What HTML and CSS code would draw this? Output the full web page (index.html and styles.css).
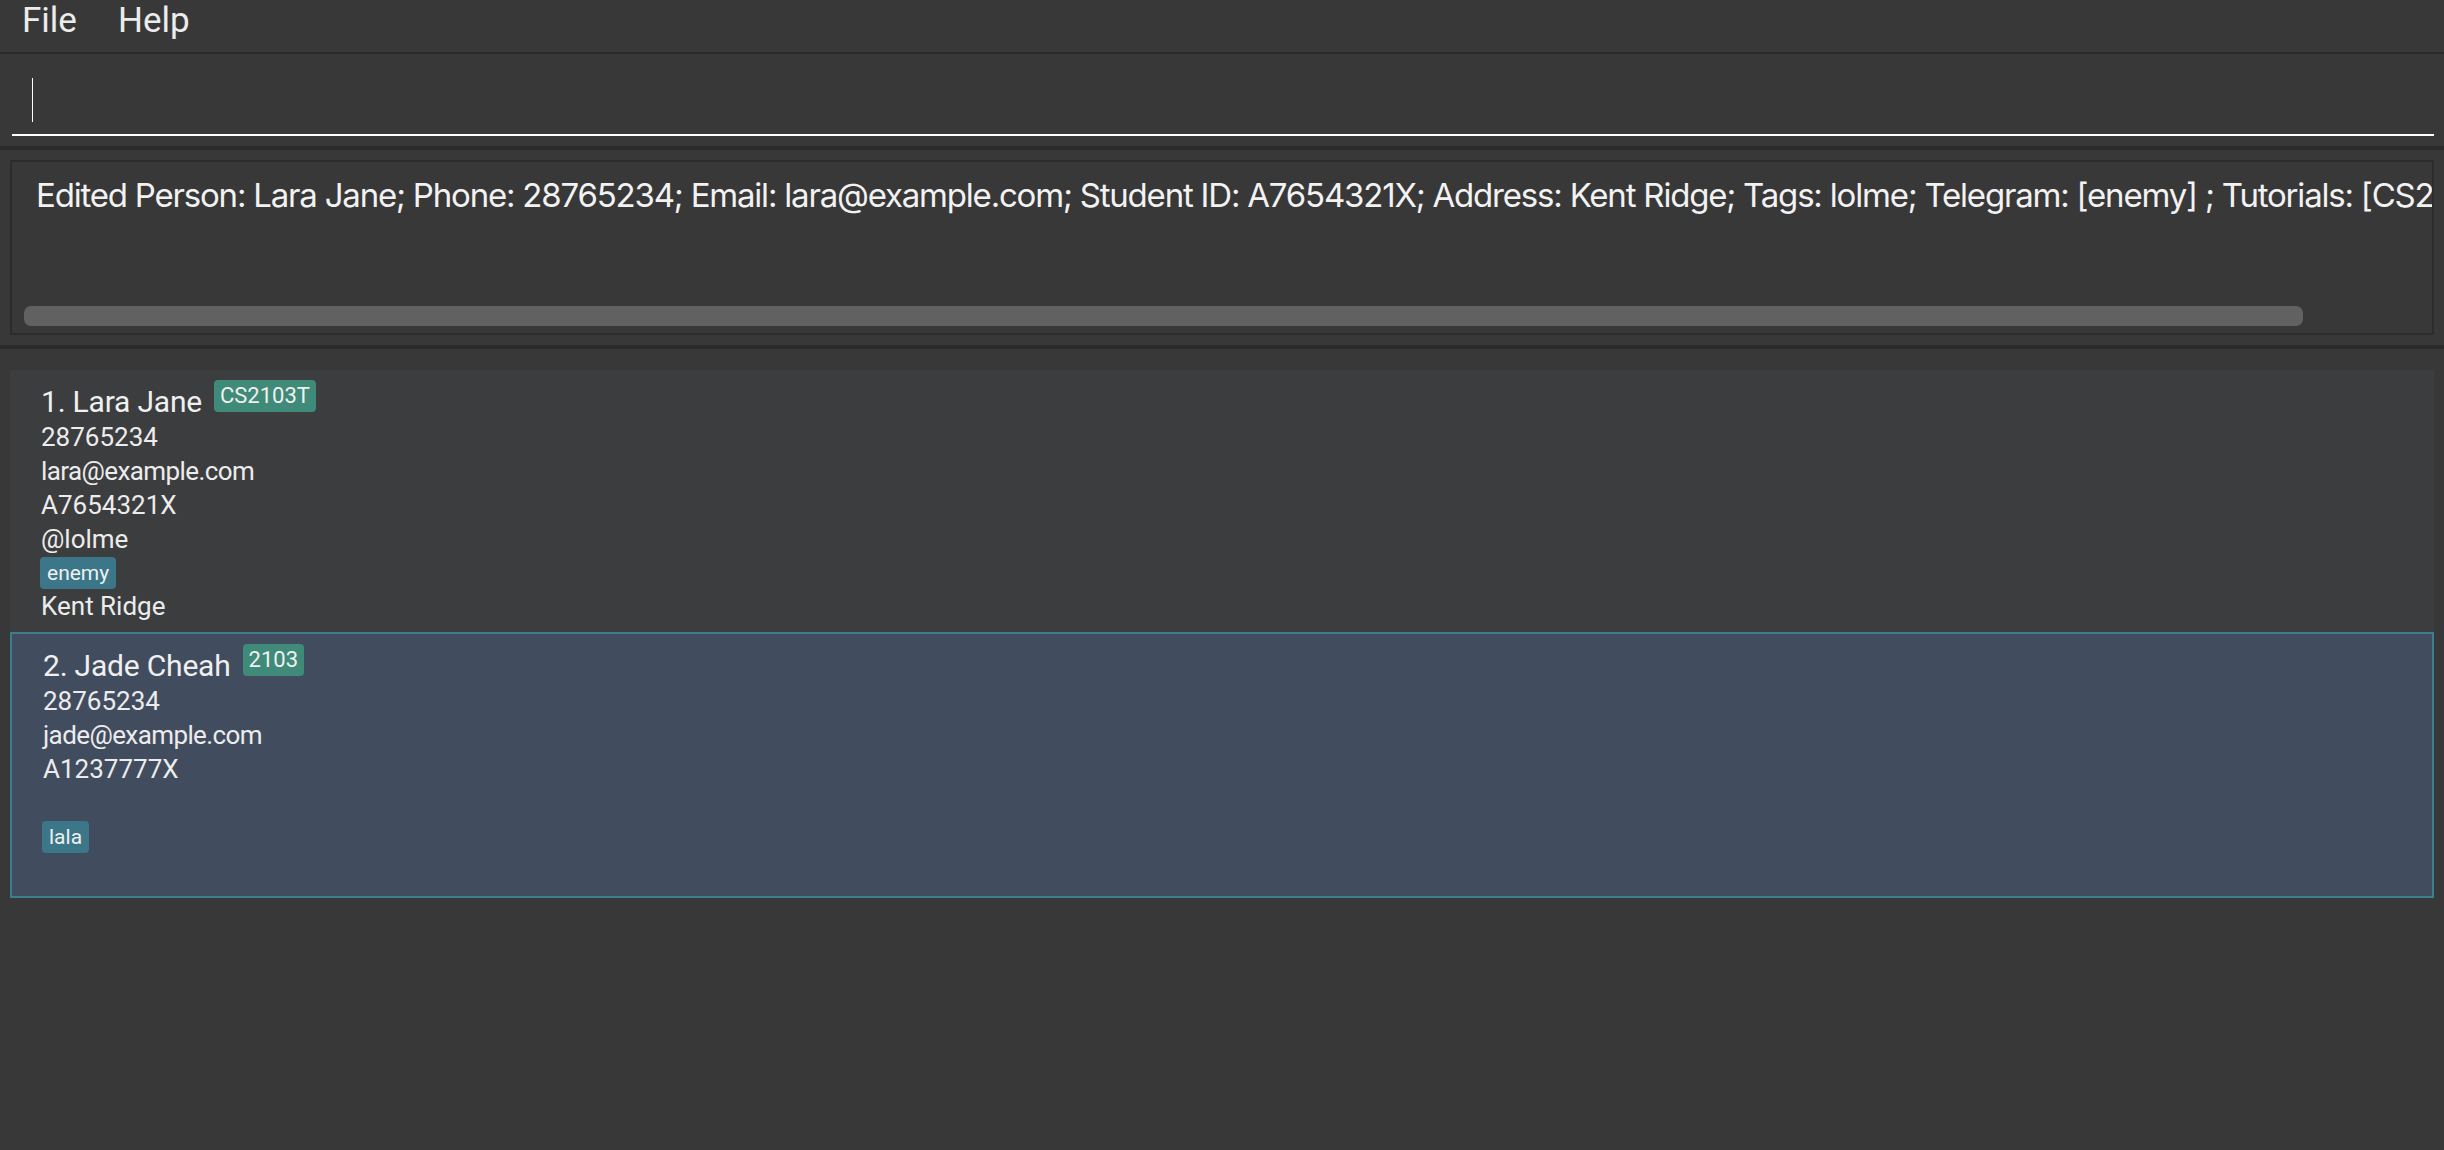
FILE: index.html
```html
<!DOCTYPE html>
<html>
<head>
<meta charset="utf-8">
<link rel="stylesheet" href="styles.css">
</head>
<body>
<div class="app">
  <div class="menubar">
    <span class="menu-item">File</span>
    <span class="menu-item">Help</span>
  </div>
  <div class="command-area">
    <div class="command-box">
      <span class="caret"></span>
    </div>
  </div>
  <div class="result-area">
    <div class="result-box">
      <div class="result-text">Edited Person: Lara Jane; Phone: 28765234; Email: lara@example.com; Student ID: A7654321X; Address: Kent Ridge; Tags: lolme; Telegram: [enemy] ; Tutorials: [CS2103T]</div>
      <div class="hscroll"><div class="thumb"></div></div>
    </div>
  </div>
  <div class="list-area">
    <div class="card">
      <div class="title-row"><span class="name">1. Lara Jane</span><span class="badge">CS2103T</span></div>
      <div class="row">28765234</div>
      <div class="row email">lara@example.com</div>
      <div class="row">A7654321X</div>
      <div class="row">@lolme</div>
      <div class="tag-row"><span class="tag">enemy</span></div>
      <div class="row">Kent Ridge</div>
    </div>
    <div class="card selected">
      <div class="title-row"><span class="name">2. Jade Cheah</span><span class="badge">2103</span></div>
      <div class="row">28765234</div>
      <div class="row email">jade@example.com</div>
      <div class="row">A1237777X</div>
      <div class="row"></div>
      <div class="tag-row"><span class="tag">lala</span></div>
      <div class="row"></div>
    </div>
  </div>
</div>
</body>
</html>
```
FILE: styles.css
```css
html, body {
  margin: 0;
  padding: 0;
  background: #383838;
  height: 100%;
  overflow: hidden;
}
body {
  font-family: Roboto, "Noto Sans", sans-serif;
  color: #ececec;
}
.app {
  display: flex;
  flex-direction: column;
  height: 1150px;
}
.menubar {
  height: 52px;
  display: flex;
  align-items: flex-start;
  gap: 41px;
  padding-left: 22px;
  border-bottom: 2px solid #2b2b2b;
}
.menu-item {
  font-size: 35px;
  line-height: 42px;
  color: #ececec;
}
.command-area {
  height: 92px;
  padding: 0 10px 0 12px;
  border-bottom: 4px solid #2b2b2b;
  display: flex;
  flex-direction: column;
}
.command-box {
  flex: 1;
  border-bottom: 2px solid #ffffff;
  margin-bottom: 10px;
  padding: 24px 0 0 20px;
}
.caret {
  display: block;
  width: 1px;
  height: 44px;
  background: #ffffff;
}
.result-area {
  padding: 10px;
  box-sizing: border-box;
  border-bottom: 4px solid #2b2b2b;
  height: 199px;
}
.result-box {
  height: 175px;
  box-sizing: border-box;
  border: 2px solid #2c2c2c;
  overflow: hidden;
  display: flex;
  flex-direction: column;
}
.result-text {
  font-family: Inter, "Noto Sans", sans-serif;
  font-size: 33px;
  line-height: 40px;
  letter-spacing: -1.2px;
  white-space: nowrap;
  padding: 13px 0 0 24px;
  color: #f2f2f2;
}
.hscroll {
  margin-top: auto;
  padding: 0 0 7px 12px;
}
.thumb {
  width: 2279px;
  height: 20px;
  border-radius: 7px;
  background: #616161;
}
.list-area {
  flex: 1;
  padding: 21px 10px 0 10px;
}
.card {
  background: #3c3d3f;
  padding: 14px 0 9px 31px;
}
.card.selected {
  background: #414d5f;
  border: 2px solid #3c7d8f;
}
.title-row {
  display: flex;
  align-items: flex-start;
  height: 36px;
}
.name {
  font-size: 30px;
  line-height: 36px;
  letter-spacing: -0.2px;
  color: #f0f0f0;
}
.badge {
  margin-left: 12px;
  margin-top: -4px;
  height: 32px;
  line-height: 32px;
  padding: 0 6px;
  font-size: 22px;
  border-radius: 4px;
  background: #3f8a78;
  color: #f0f0f0;
}
.row {
  font-size: 26px;
  line-height: 34px;
  height: 34px;
  color: #ececec;
  white-space: nowrap;
}
.row.email {
  letter-spacing: -0.6px;
}
.tag-row {
  height: 33px;
  padding-top: 1px;
  box-sizing: border-box;
  display: flex;
}
.tag {
  display: inline-block;
  height: 32px;
  line-height: 32px;
  padding: 0 7px;
  margin-left: -1px;
  font-size: 21px;
  border-radius: 4px;
  background: #3b7689;
  color: #f0f0f0;
}
```
